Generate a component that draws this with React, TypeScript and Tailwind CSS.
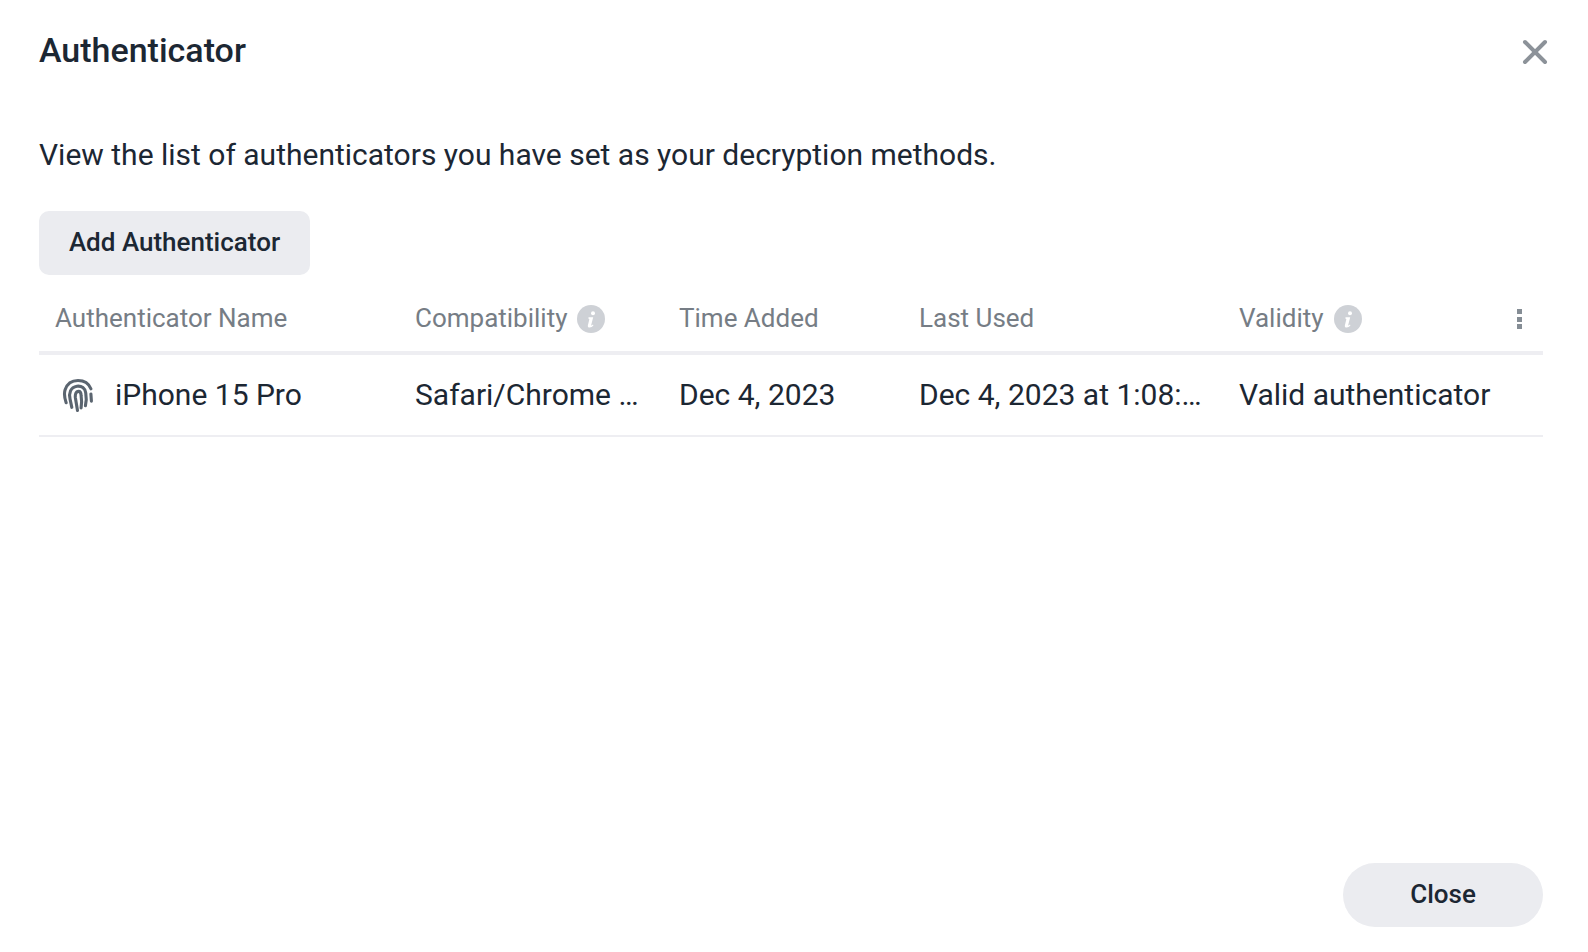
import { X } from 'lucide-react';

const COLUMNS = [
  { label: 'Compatibility', value: 'Safari/Chrome on iOS devices', width: 'w-[264px]', info: true },
  { label: 'Time Added', value: 'Dec 4, 2023', width: 'w-[240px]', info: false },
  { label: 'Last Used', value: 'Dec 4, 2023 at 1:08:21 PM', width: 'w-[320px]', info: false },
];

function InfoDot() {
  return (
    <svg viewBox="0 0 28 28" className="w-7 h-7 shrink-0 ml-[9px] mt-[2px]">
      <circle cx="14" cy="14" r="14" fill="#ced1d6" />
      <circle cx="16" cy="8.300" r="2" fill="#fff" />
      <path d="M11.500 12.200h4.700l-2 7.800c-.1.500.3.700.8.300l.9-.7.600.7c-1.200 1.500-2.400 2.200-3.800 2.200-1.500 0-2.200-.9-1.800-2.300l1.400-5.700c.1-.5-.1-.7-.9-.8z" fill="#fff" />
    </svg>
  );
}

function FingerprintIcon() {
  return (
    <svg viewBox="0 0 30 32" fill="none" stroke="#5b6570" strokeWidth="3" strokeLinecap="round" className="w-[32px] h-[33px] shrink-0 mt-[2px]">
      <path d="M3.500 23C1.800 18 1.500 13.500 2.500 10.500 4.500 4.500 9 1.500 15 1.500c6 0 10.500 3 12.500 8" />
      <path d="M9 27.500 7.300 19.500C6 14 7.500 8 14 7c4.500-.6 8 2 8.500 6.500l.5 6.500-.8 6" />
      <path d="M14.500 30.500 12.500 18.500C12 15 13 12 15.500 12c2 0 2.500 2 2.500 4l.5 6-.5 6" />
      <path d="M27.500 14.500 28 21.500" />
    </svg>
  );
}

export default function App() {
  return (
    <div className="w-[1588px] h-[952px] bg-white flex flex-col pl-[39px] pr-[45px] pb-[25px] text-[#1c2733] font-['Roboto',sans-serif]">
      <div className="flex items-center justify-between pt-[30px]">
        <h1 className="text-[34px] leading-[40px] font-medium h-[44px]">Authenticator</h1>
        <X size={40} strokeWidth={2.4} className="text-[#8c9299] -mr-[12px]" />
      </div>
      <p className="mt-[59px] text-[30px] leading-[44px]">View the list of authenticators you have set as your decryption methods.</p>
      <button className="mt-[34px] w-[271px] h-[64px] pb-[2px] rounded-[10px] bg-[#ebecf0] text-[26px] font-medium">Add Authenticator</button>

      <div className="flex items-center h-[80px] pt-[10px] border-b-4 border-[#eeeef2] text-[26px] text-[#767d85]">
        <div className="w-[360px] ml-4">Authenticator Name</div>
        {COLUMNS.map(c => (
          <div key={c.label} className={`${c.width} flex items-center`}>
            {c.label}
            {c.info && <InfoDot />}
          </div>
        ))}
        <div className="flex-1 flex items-center">
          <span className="mr-[1px]">Validity</span>
          <InfoDot />
        </div>
        <div className="flex flex-col gap-[2.5px] mr-[21px] mt-[2px]">
          <span className="w-[5px] h-[5px] bg-[#858d95]" />
          <span className="w-[5px] h-[5px] bg-[#858d95]" />
          <span className="w-[5px] h-[5px] bg-[#858d95]" />
        </div>
      </div>

      <div className="flex items-center h-[82px] pb-[2px] border-b-2 border-[#eeeef2] text-[30px]">
        <div className="w-[376px] pl-[23px] flex items-center gap-[21px]">
          <FingerprintIcon />
          iPhone 15 Pro
        </div>
        {COLUMNS.map(c => (
          <div key={c.label} className={`${c.width} pr-[36px]`}>
            <div className="truncate">{c.value}</div>
          </div>
        ))}
        <div className="flex-1">Valid authenticator</div>
      </div>

      <div className="mt-auto flex justify-end">
        <button className="w-[200px] h-[64px] pb-[2px] rounded-full bg-[#ebecf0] text-[26px] font-medium">Close</button>
      </div>
    </div>
  );
}
